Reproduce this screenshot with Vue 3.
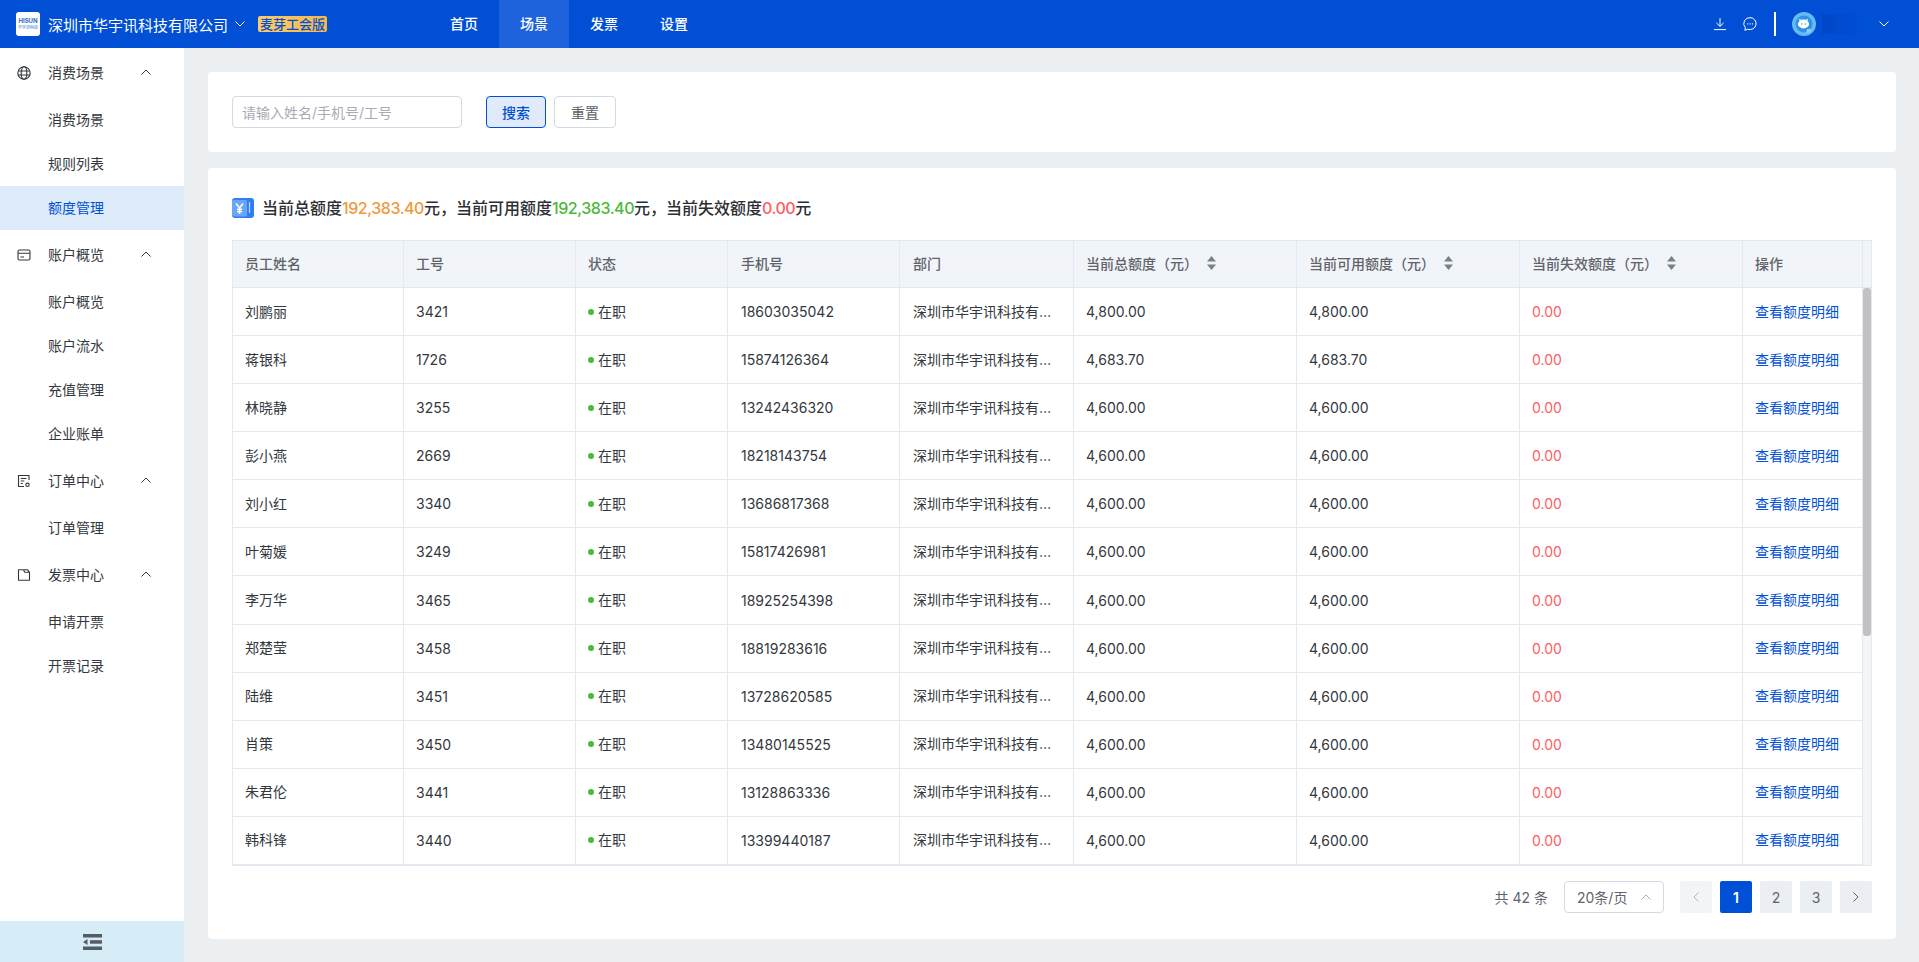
<template>
  <div class="page">
    <header class="topbar">
      <div class="brand">
        <div class="logo">
          <span class="logo-en">HISUN</span>
          <span class="logo-cn">华宇讯科技</span>
        </div>
        <span class="company">深圳市华宇讯科技有限公司</span>
        <svg class="company-arrow" viewBox="0 0 10 6" width="10" height="6"><path d="M.5.5 5 5 9.5.5" fill="none" stroke="#fff" stroke-width="1"/></svg>
        <span class="edition">麦芽工会版</span>
      </div>
      <nav class="topnav">
        <a v-for="item in navItems" :key="item" class="topnav-item" :class="{ active: item === '场景' }">{{ item }}</a>
      </nav>
      <div class="top-right">
        <svg class="top-icon" viewBox="0 0 14 14" width="14" height="14" fill="none" stroke="#fff" stroke-width="1">
          <path d="M7 1v8.2M3.4 5.9 7 9.4l3.6-3.5M1 12.6h12"/>
        </svg>
        <svg class="top-icon" viewBox="0 0 14 14" width="14" height="14" fill="none" stroke="#fff" stroke-width="1">
          <path d="M7 .6a6.2 6 0 1 1-2.3 11.6L1.9 13.3l.4-2.7A6 6 0 0 1 7 .6Z"/>
          <path d="M4.3 6.8h1M6.6 6.8h1M8.9 6.8h1" stroke-width="1.2"/>
        </svg>
        <span class="top-divider"></span>
        <svg class="avatar" viewBox="0 0 24 24" width="24" height="24">
          <circle cx="12" cy="12" r="12" fill="#69b9f3"/>
          <circle cx="12" cy="12" r="8.5" fill="#2f93ea"/>
          <path d="M15 17h5l-2 4h-4z" fill="#8bc9f6"/>
          <ellipse cx="11.5" cy="12" rx="5.6" ry="4.4" fill="#fff"/>
          <path d="M7.5 9 7 6.8 9.5 8M15.500 9l.6-2.200L13.500 8" fill="#fff"/>
          <circle cx="9.800" cy="12" r=".7" fill="#2f93ea"/>
          <circle cx="13.300" cy="12" r=".7" fill="#2f93ea"/>
        </svg>
        <span class="user-name"></span>
        <svg class="user-arrow" viewBox="0 0 10 6" width="10" height="6"><path d="M.5.5 5 5 9.500.5" fill="none" stroke="#fff" stroke-width="1"/></svg>
      </div>
    </header>

    <div class="body">
      <aside class="sidebar">
        <div class="menu">
          <template v-for="group in menuGroups" :key="group.title">
            <div class="menu-group">
              <svg class="menu-icon" viewBox="0 0 14 14" width="14" height="14" fill="none" stroke="#33383e" stroke-width="1.100">
                <template v-if="group.icon === 'globe'">
                  <circle cx="7" cy="7" r="6.200"/>
                  <ellipse cx="7" cy="7" rx="2.800" ry="6.200"/>
                  <path d="M1 5h12M1 9h12"/>
                </template>
                <template v-else-if="group.icon === 'card'">
                  <rect x="1" y="2" width="12" height="10" rx="1.500"/>
                  <path d="M1 5.300h12M3.500 9h3.500"/>
                </template>
                <template v-else-if="group.icon === 'order'">
                  <path d="M12 6V1.500H1.500v11H7"/>
                  <path d="M3.800 4.500h5.700M3.800 7h3.500M3.800 9.500h2"/>
                  <circle cx="10.500" cy="10.800" r="1.700"/>
                </template>
                <template v-else>
                  <path d="M1.500 1.800h5l1.200 2.400h4.800v8H1.500z" stroke-linejoin="round"/>
                  <path d="M7 1.800h3.500l2 2.400"/>
                </template>
              </svg>
              <span class="menu-title">{{ group.title }}</span>
              <svg class="menu-arrow" viewBox="0 0 10 6" width="10" height="6"><path d="M.5 5.500 5 1l4.500 4.500" fill="none" stroke="#33383e" stroke-width="1"/></svg>
            </div>
            <a v-for="child in group.children" :key="child" class="menu-item" :class="{ active: child === '额度管理' }">{{ child }}</a>
          </template>
        </div>
        <div class="collapse-bar">
          <svg viewBox="0 0 19 16" width="19" height="16" fill="#565c64">
            <rect x="0" y="0" width="19" height="3.500"/>
            <rect x="7" y="6.200" width="12" height="3.500"/>
            <path d="M0 8 4.500 5v6z"/>
            <rect x="0" y="12.500" width="19" height="3.500"/>
          </svg>
        </div>
      </aside>

      <main class="main">
        <section class="card search-card">
          <input class="search-input" type="text" placeholder="请输入姓名/手机号/工号" />
          <button class="btn btn-primary">搜索</button>
          <button class="btn">重置</button>
        </section>

        <section class="card table-card">
          <h2 class="summary">
            <svg class="summary-icon" viewBox="0 0 22 20" width="22" height="20">
              <rect width="22" height="20" rx="3" fill="#2f7cf6"/>
              <rect x="0" y="2" width="15" height="16.500" rx="1" fill="#6aa5fa"/>
              <path d="M17.500 4v11" stroke="#bcd7fc" stroke-width="1.200"/>
              <path d="M4 5.500 7.500 10 11 5.500M7.500 10v6M5 11.200h5M5 13.500h5" fill="none" stroke="#fff" stroke-width="1.500"/>
            </svg>
            <span>当前总额度<span class="num num-orange">192,383.40</span>元，当前可用额度<span class="num num-green">192,383.40</span>元，当前失效额度<span class="num num-red">0.00</span>元</span>
          </h2>

          <div class="table-box">
            <div class="table-head">
              <table>
                <colgroup>
                  <col v-for="(w, i) in colWidths" :key="i" :style="{ width: w + 'px' }" />
                </colgroup>
                <thead>
                  <tr>
                    <th v-for="col in columns" :key="col.label">
                      <span class="th-inner">
                        {{ col.label }}
                        <svg v-if="col.sortable" class="sort-icon" viewBox="0 0 9 14" width="9" height="14" fill="#7b8087">
                          <path d="M4.500 0 9 5.500H0zM4.500 14 0 8.500h9z"/>
                        </svg>
                      </span>
                    </th>
                  </tr>
                </thead>
              </table>
              <div class="head-gutter"></div>
            </div>
            <div class="table-body">
              <table>
                <colgroup>
                  <col v-for="(w, i) in colWidths" :key="i" :style="{ width: w + 'px' }" />
                </colgroup>
                <tbody>
                  <tr v-for="row in rows" :key="row.no">
                    <td>{{ row.name }}</td>
                    <td class="digits">{{ row.no }}</td>
                    <td><span class="status-dot"></span>在职</td>
                    <td class="digits">{{ row.phone }}</td>
                    <td><div class="ellipsis">深圳市华宇讯科技有限公司</div></td>
                    <td class="digits">{{ row.total }}</td>
                    <td class="digits">{{ row.total }}</td>
                    <td class="digits invalid">0.00</td>
                    <td><a class="link">查看额度明细</a></td>
                  </tr>
                </tbody>
              </table>
              <div class="scroll-track"><div class="scroll-thumb"></div></div>
            </div>
          </div>

          <div class="pager">
            <span class="pager-total">共 42 条</span>
            <div class="pager-size">
              <span>20条/页</span>
              <svg viewBox="0 0 10 6" width="10" height="6"><path d="M.5 5.500 5 1l4.500 4.500" fill="none" stroke="#a8abb2" stroke-width="1"/></svg>
            </div>
            <button class="page-btn disabled">
              <svg viewBox="0 0 6 10" width="6" height="10"><path d="M5.500.5 1 5l4.500 4.500" fill="none" stroke="#b4b8bf" stroke-width="1"/></svg>
            </button>
            <button v-for="p in 3" :key="p" class="page-btn" :class="{ current: p === 1 }">{{ p }}</button>
            <button class="page-btn">
              <svg viewBox="0 0 6 10" width="6" height="10"><path d="M.5.5 5 5 .5 9.500" fill="none" stroke="#5f646b" stroke-width="1"/></svg>
            </button>
          </div>
        </section>
      </main>
    </div>
  </div>
</template>

<script setup>
const navItems = ['首页', '场景', '发票', '设置'];

const menuGroups = [
  { title: '消费场景', icon: 'globe', children: ['消费场景', '规则列表', '额度管理'] },
  { title: '账户概览', icon: 'card', children: ['账户概览', '账户流水', '充值管理', '企业账单'] },
  { title: '订单中心', icon: 'order', children: ['订单管理'] },
  { title: '发票中心', icon: 'folder', children: ['申请开票', '开票记录'] },
];

const colWidths = [171, 172, 152, 172, 174, 223, 223, 223, 120];

const columns = [
  { label: '员工姓名' },
  { label: '工号' },
  { label: '状态' },
  { label: '手机号' },
  { label: '部门' },
  { label: '当前总额度（元）', sortable: true },
  { label: '当前可用额度（元）', sortable: true },
  { label: '当前失效额度（元）', sortable: true },
  { label: '操作' },
];

const rows = [
  { name: '刘鹏丽', no: '3421', phone: '18603035042', total: '4,800.00' },
  { name: '蒋银科', no: '1726', phone: '15874126364', total: '4,683.70' },
  { name: '林晓静', no: '3255', phone: '13242436320', total: '4,600.00' },
  { name: '彭小燕', no: '2669', phone: '18218143754', total: '4,600.00' },
  { name: '刘小红', no: '3340', phone: '13686817368', total: '4,600.00' },
  { name: '叶菊媛', no: '3249', phone: '15817426981', total: '4,600.00' },
  { name: '李万华', no: '3465', phone: '18925254398', total: '4,600.00' },
  { name: '郑楚莹', no: '3458', phone: '18819283616', total: '4,600.00' },
  { name: '陆维', no: '3451', phone: '13728620585', total: '4,600.00' },
  { name: '肖策', no: '3450', phone: '13480145525', total: '4,600.00' },
  { name: '朱君伦', no: '3441', phone: '13128863336', total: '4,600.00' },
  { name: '韩科锋', no: '3440', phone: '13399440187', total: '4,600.00' },
];
</script>

<style>
html, body {
  margin: 0;
  padding: 0;
  overflow: hidden;
}
</style>

<style scoped>
.page {
  display: flex;
  flex-direction: column;
  height: 962px;
  background: #ebeff2;
  font-family: Inter, "Noto Sans CJK SC", sans-serif;
  font-size: 14px;
  color: #33383e;
  overflow: hidden;
}

/* top bar */
.topbar {
  display: flex;
  align-items: center;
  flex: none;
  height: 48px;
  background: #004fd5;
  color: #fff;
}

.brand {
  display: flex;
  align-items: center;
  width: 429px;
  padding-left: 16px;
  box-sizing: border-box;
}

.logo {
  display: flex;
  flex-direction: column;
  align-items: center;
  justify-content: center;
  width: 24px;
  height: 24px;
  border-radius: 3px;
  background: #fff;
  line-height: 1;
}

.logo-en {
  font-size: 6px;
  font-weight: 700;
  color: #2a6fc9;
}

.logo-cn {
  margin-top: 2px;
  font-size: 4px;
  color: #2a6fc9;
}

.company {
  margin-left: 8px;
  font-size: 15px;
}

.company-arrow {
  margin-left: 7px;
}

.edition {
  margin-left: 13px;
  padding: 0 2px;
  height: 16px;
  line-height: 16px;
  border-radius: 2px;
  background: linear-gradient(90deg, #fcca67, #f6b84c);
  font-size: 13px;
  font-weight: 500;
  color: #0050d6;
}

.topnav {
  display: flex;
}

.topnav-item {
  width: 70px;
  height: 48px;
  line-height: 48px;
  text-align: center;
  font-weight: 500;
}

.topnav-item.active {
  background: #1e63dc;
}

.top-right {
  display: flex;
  align-items: center;
  margin-left: auto;
  padding-right: 30px;
}

.top-icon {
  margin-right: 16px;
}

.top-icon:first-child {
  margin-right: 16px;
}

.top-divider {
  width: 2px;
  height: 24px;
  margin: 0 16px 0 1px;
  background: #fff;
}

.user-name {
  width: 43px;
  height: 20px;
  margin: 0 14px 0 6px;
  background: linear-gradient(90deg, #0047c8, #0050d8);
}

/* sidebar */
.body {
  display: flex;
  flex: 1;
  min-height: 0;
}

.sidebar {
  display: flex;
  flex-direction: column;
  flex: none;
  width: 184px;
  background: #fff;
}

.menu {
  flex: 1;
}

.menu-group {
  display: flex;
  align-items: center;
  height: 50px;
  padding-left: 17px;
}

.menu-title {
  margin-left: 17px;
  margin-bottom: 2px;
}

.menu-arrow {
  margin-left: 37px;
  margin-bottom: 2px;
}

.menu-item {
  display: block;
  height: 44px;
  line-height: 44px;
  padding-left: 48px;
}

.menu-item.active {
  background: #deebfb;
  color: #0050d6;
}

.collapse-bar {
  display: flex;
  align-items: center;
  justify-content: center;
  flex: none;
  height: 41px;
  background: #d6edf8;
}

/* main */
.main {
  flex: 1;
  min-width: 0;
  padding: 24px 23px 23px 24px;
  display: flex;
  flex-direction: column;
  gap: 16px;
}

.card {
  background: #fff;
  border-radius: 4px;
  padding: 24px;
}

.search-card {
  display: flex;
  align-items: center;
}

.search-input {
  width: 230px;
  height: 32px;
  box-sizing: border-box;
  padding: 0 9px;
  border: 1px solid #d5d9e5;
  border-radius: 4px;
  font: inherit;
  color: #33383e;
  outline: none;
}

.search-input::placeholder {
  color: #a8abb2;
}

.btn {
  width: 62px;
  height: 32px;
  margin-left: 8px;
  padding: 0;
  border: 1px solid #d5d9e5;
  border-radius: 4px;
  background: #fff;
  font: inherit;
  color: #5a5f66;
}

.btn-primary {
  width: 60px;
  margin-left: 24px;
  border-color: #0050d6;
  background: #e0eafa;
  color: #0050d6;
  font-weight: 500;
}

.summary {
  display: flex;
  align-items: center;
  height: 32px;
  box-sizing: border-box;
  padding-bottom: 2px;
  margin: 0 0 16px;
  font-size: 16px;
  font-weight: 500;
  color: #2b2f33;
  white-space: nowrap;
}

.summary-icon {
  margin-top: 2px;
  margin-right: 8px;
}

.num { letter-spacing: -0.45px; }
.num-orange { color: #ee9a3c; }
.num-green { color: #4cb83b; }
.num-red { color: #ff5c60; }

/* table */
.table-box {
  height: 626px;
  box-sizing: border-box;
  border: 1px solid #e4e8f1;
  overflow: hidden;
}

.table-head,
.table-body {
  display: flex;
}

.table-body {
  height: 577px;
  overflow: hidden;
}

table {
  flex: none;
  width: 1630px;
  table-layout: fixed;
  border-collapse: separate;
  border-spacing: 0;
}

th,
td {
  box-sizing: border-box;
  padding: 0 12px 2px;
  border-right: 1px solid #e4e8f1;
  border-bottom: 1px solid #e4e8f1;
  text-align: left;
  white-space: nowrap;
}

th:nth-child(4),
th:nth-child(5),
td:nth-child(4),
td:nth-child(5) {
  padding-left: 13px;
}

th {
  height: 47px;
  background: #f1f4f8;
  font-weight: 500;
  color: #5f646b;
}

td {
  height: 48px;
  color: #33383e;
}

td.digits {
  padding-bottom: 0;
}

.th-inner {
  display: flex;
  align-items: center;
}

.sort-icon {
  margin-left: 9px;
}

.head-gutter {
  flex: 1;
  background: #f1f4f8;
  border-bottom: 1px solid #e4e8f1;
}

.scroll-track {
  flex: 1;
  background: #f4f5f7;
}

.scroll-thumb {
  height: 348px;
  border-radius: 3px;
  background: #c2c2c2;
}

.status-dot {
  display: inline-block;
  width: 6px;
  height: 6px;
  margin-right: 4px;
  border-radius: 50%;
  background: #4cb83b;
  vertical-align: 2px;
}

.ellipsis {
  overflow: hidden;
  text-overflow: ellipsis;
}

td.invalid {
  color: #ff5c60;
}

.link {
  color: #0050d6;
}

/* pagination */
.pager {
  display: flex;
  align-items: center;
  justify-content: flex-end;
  margin-top: 15px;
  margin-bottom: 2px;
  color: #5f646b;
}

.pager-total {
  margin-right: 16px;
}

.pager-size {
  display: flex;
  align-items: center;
  justify-content: space-between;
  width: 100px;
  height: 32px;
  box-sizing: border-box;
  padding: 0 12px;
  margin-right: 16px;
  border: 1px solid #d5d9e5;
  border-radius: 4px;
}

.page-btn {
  display: flex;
  align-items: center;
  justify-content: center;
  width: 32px;
  height: 32px;
  margin-left: 8px;
  padding: 0;
  border: 0;
  border-radius: 2px;
  background: #ebeef2;
  font: inherit;
  color: #5f646b;
}

.page-btn.disabled {
  margin-left: 0;
  background: #f2f5f8;
}

.page-btn.current {
  background: #0050d6;
  color: #fff;
  font-weight: 600;
}
</style>
